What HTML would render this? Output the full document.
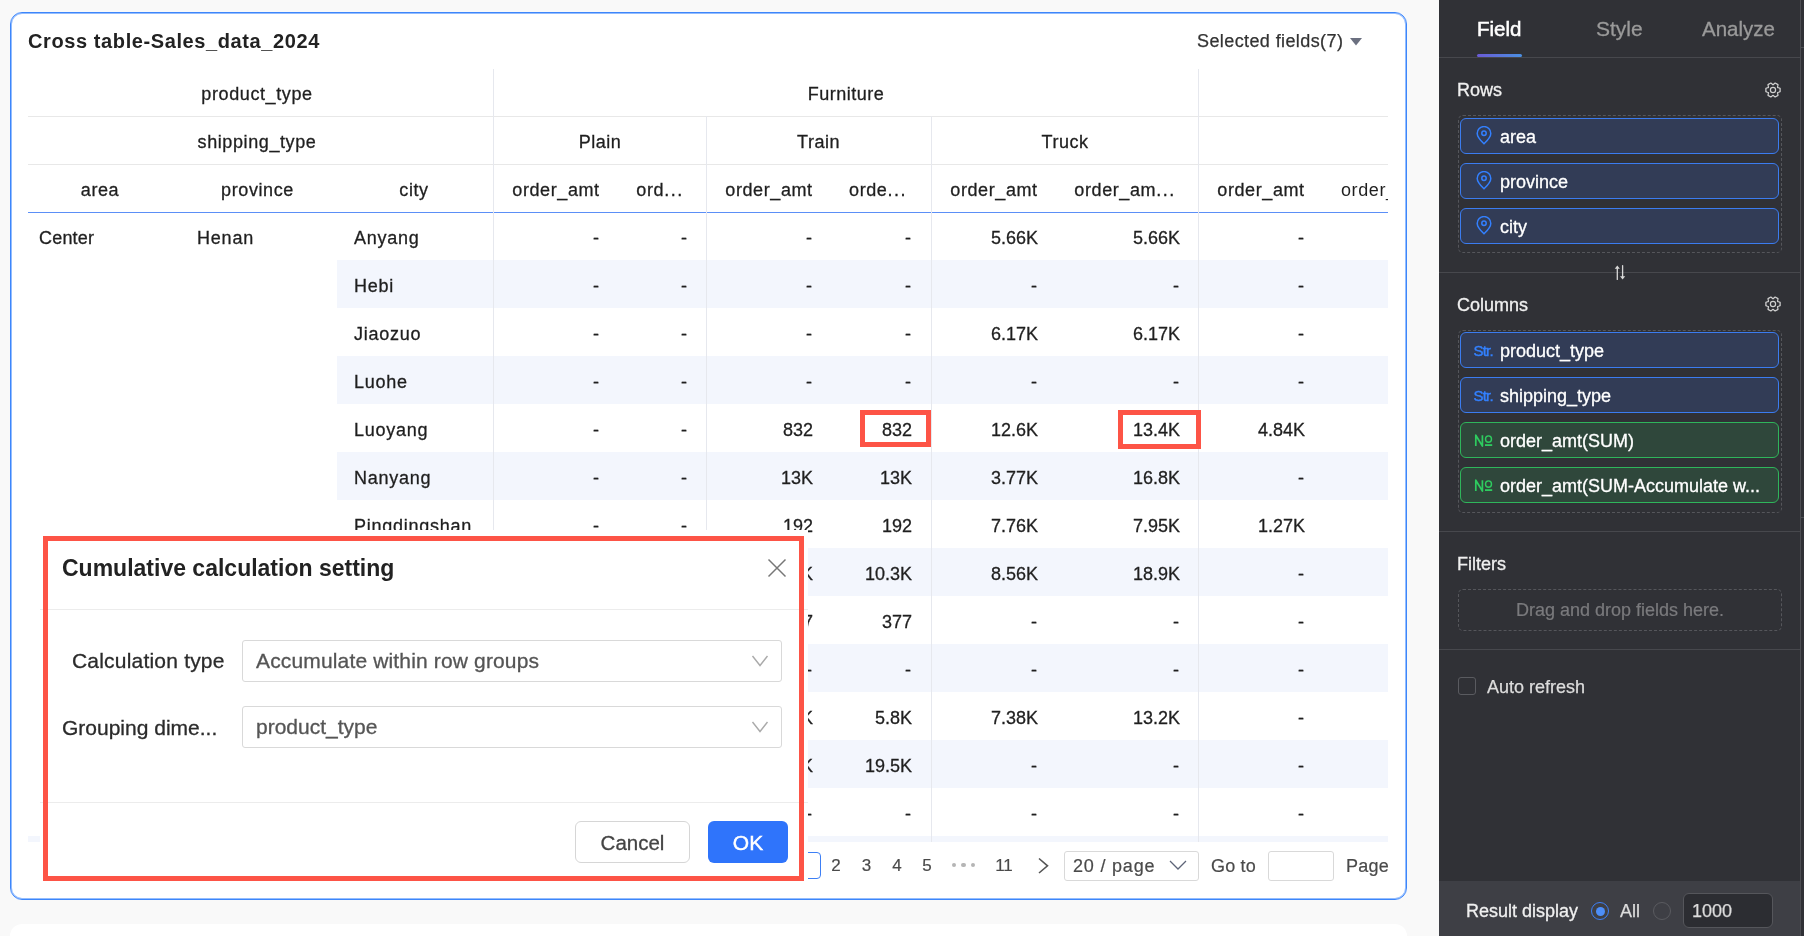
<!DOCTYPE html>
<html><head><meta charset="utf-8"><style>
html,body{margin:0;padding:0}
body{width:1804px;height:936px;position:relative;overflow:hidden;background:#f9f9f9;font-family:"Liberation Sans", sans-serif}
.t{position:absolute;line-height:1;white-space:nowrap}
</style></head><body><div style="position:absolute;left:0;top:0;width:1804px;height:936px;will-change:transform">
<div style="position:absolute;left:10px;top:12px;width:1397px;height:888px;box-sizing:border-box;border:1px solid #3d86fb;box-shadow:inset 0 0 0 1px rgba(61,134,251,0.55);border-radius:12px;background:#fff"></div>
<div style="position:absolute;left:10px;top:924px;width:1397px;height:60px;border-radius:12px;background:#fff"></div>
<div class="t" style="left:28px;top:31.07px;font-size:20px;color:#222;font-weight:bold;letter-spacing:0.6px;">Cross table-Sales_data_2024</div>
<div class="t" style="left:1197px;top:31.76px;font-size:18px;color:#333;font-weight:normal;letter-spacing:0.4px;-webkit-text-stroke:0.25px #333;">Selected fields(7)</div>
<svg style="position:absolute;left:1350px;top:38px" width="12" height="8"><path d="M0 0 L12 0 L6 7.5 Z" fill="#6b7080"/></svg>
<div style="position:absolute;left:337px;top:260px;width:1051px;height:48px;background:#f3f6fd"></div>
<div style="position:absolute;left:337px;top:356px;width:1051px;height:48px;background:#f3f6fd"></div>
<div style="position:absolute;left:337px;top:452px;width:1051px;height:48px;background:#f3f6fd"></div>
<div style="position:absolute;left:337px;top:548px;width:1051px;height:48px;background:#f3f6fd"></div>
<div style="position:absolute;left:337px;top:644px;width:1051px;height:48px;background:#f3f6fd"></div>
<div style="position:absolute;left:337px;top:740px;width:1051px;height:48px;background:#f3f6fd"></div>
<div style="position:absolute;left:28px;top:836px;width:1360px;height:6px;background:#f3f6fd"></div>
<div style="position:absolute;left:28px;top:116px;width:1360px;height:1px;background:#e8e8e8"></div>
<div style="position:absolute;left:28px;top:164px;width:1360px;height:1px;background:#e8e8e8"></div>
<div style="position:absolute;left:28px;top:212px;width:1360px;height:1px;background:#5b8ff7"></div>
<div style="position:absolute;left:493px;top:69px;width:1px;height:773px;background:#e6e8ee"></div>
<div style="position:absolute;left:1198px;top:69px;width:1px;height:773px;background:#e6e8ee"></div>
<div style="position:absolute;left:706px;top:116px;width:1px;height:726px;background:#e6e8ee"></div>
<div style="position:absolute;left:931px;top:116px;width:1px;height:726px;background:#e6e8ee"></div>
<div class="t" style="left:-143px;width:800px;text-align:center;top:84.76px;font-size:18px;color:#1f1f1f;font-weight:normal;letter-spacing:0.6px;-webkit-text-stroke:0.3px #1f1f1f;">product_type</div>
<div class="t" style="left:-143px;width:800px;text-align:center;top:132.76px;font-size:18px;color:#1f1f1f;font-weight:normal;letter-spacing:0.6px;-webkit-text-stroke:0.3px #1f1f1f;">shipping_type</div>
<div class="t" style="left:-300px;width:800px;text-align:center;top:180.76px;font-size:18px;color:#1f1f1f;font-weight:normal;letter-spacing:0.6px;-webkit-text-stroke:0.3px #1f1f1f;">area</div>
<div class="t" style="left:-142.5px;width:800px;text-align:center;top:180.76px;font-size:18px;color:#1f1f1f;font-weight:normal;letter-spacing:0.6px;-webkit-text-stroke:0.3px #1f1f1f;">province</div>
<div class="t" style="left:14px;width:800px;text-align:center;top:180.76px;font-size:18px;color:#1f1f1f;font-weight:normal;letter-spacing:0.6px;-webkit-text-stroke:0.3px #1f1f1f;">city</div>
<div class="t" style="left:446px;width:800px;text-align:center;top:84.76px;font-size:18px;color:#1f1f1f;font-weight:normal;letter-spacing:0.5px;-webkit-text-stroke:0.3px #1f1f1f;">Furniture</div>
<div class="t" style="left:200px;width:800px;text-align:center;top:132.76px;font-size:18px;color:#1f1f1f;font-weight:normal;letter-spacing:0.5px;-webkit-text-stroke:0.3px #1f1f1f;">Plain</div>
<div class="t" style="left:418.5px;width:800px;text-align:center;top:132.76px;font-size:18px;color:#1f1f1f;font-weight:normal;letter-spacing:0.5px;-webkit-text-stroke:0.3px #1f1f1f;">Train</div>
<div class="t" style="left:665px;width:800px;text-align:center;top:132.76px;font-size:18px;color:#1f1f1f;font-weight:normal;letter-spacing:0.5px;-webkit-text-stroke:0.3px #1f1f1f;">Truck</div>
<div class="t" style="left:156px;width:800px;text-align:center;top:180.76px;font-size:18px;color:#1f1f1f;font-weight:normal;letter-spacing:0.6px;-webkit-text-stroke:0.3px #1f1f1f;">order_amt</div>
<div class="t" style="left:369px;width:800px;text-align:center;top:180.76px;font-size:18px;color:#1f1f1f;font-weight:normal;letter-spacing:0.6px;-webkit-text-stroke:0.3px #1f1f1f;">order_amt</div>
<div class="t" style="left:594px;width:800px;text-align:center;top:180.76px;font-size:18px;color:#1f1f1f;font-weight:normal;letter-spacing:0.6px;-webkit-text-stroke:0.3px #1f1f1f;">order_amt</div>
<div class="t" style="left:861px;width:800px;text-align:center;top:180.76px;font-size:18px;color:#1f1f1f;font-weight:normal;letter-spacing:0.6px;-webkit-text-stroke:0.3px #1f1f1f;">order_amt</div>
<div class="t" style="left:260px;width:800px;text-align:center;top:180.76px;font-size:18px;color:#1f1f1f;font-weight:normal;letter-spacing:0.6px;-webkit-text-stroke:0.3px #1f1f1f;">ord<span style='letter-spacing:1.5px'>...</span></div>
<div class="t" style="left:478px;width:800px;text-align:center;top:180.76px;font-size:18px;color:#1f1f1f;font-weight:normal;letter-spacing:0.6px;-webkit-text-stroke:0.3px #1f1f1f;">orde<span style='letter-spacing:1.5px'>...</span></div>
<div class="t" style="left:725px;width:800px;text-align:center;top:180.76px;font-size:18px;color:#1f1f1f;font-weight:normal;letter-spacing:0.6px;-webkit-text-stroke:0.3px #1f1f1f;">order_am<span style='letter-spacing:1.5px'>...</span></div>
<div style="position:absolute;left:1324px;top:164px;width:64px;height:48px;overflow:hidden"><div class="t" style="left:17px;top:16.76px;font-size:18px;color:#1f1f1f;letter-spacing:0.6px">order_amt</div></div>
<div class="t" style="left:39px;top:228.76px;font-size:18px;color:#1f1f1f;font-weight:normal;letter-spacing:0.2px;-webkit-text-stroke:0.3px #1f1f1f;">Center</div>
<div class="t" style="left:197px;top:228.76px;font-size:18px;color:#1f1f1f;font-weight:normal;letter-spacing:0.8px;-webkit-text-stroke:0.3px #1f1f1f;">Henan</div>
<div class="t" style="left:354px;top:228.76px;font-size:18px;color:#1f1f1f;font-weight:normal;letter-spacing:0.75px;-webkit-text-stroke:0.3px #1f1f1f;">Anyang</div>
<div class="t" style="left:-201px;width:800px;text-align:right;top:228.76px;font-size:18px;color:#1f1f1f;font-weight:normal;-webkit-text-stroke:0.3px #1f1f1f;">-</div>
<div class="t" style="left:-113px;width:800px;text-align:right;top:228.76px;font-size:18px;color:#1f1f1f;font-weight:normal;-webkit-text-stroke:0.3px #1f1f1f;">-</div>
<div class="t" style="left:12px;width:800px;text-align:right;top:228.76px;font-size:18px;color:#1f1f1f;font-weight:normal;-webkit-text-stroke:0.3px #1f1f1f;">-</div>
<div class="t" style="left:111px;width:800px;text-align:right;top:228.76px;font-size:18px;color:#1f1f1f;font-weight:normal;-webkit-text-stroke:0.3px #1f1f1f;">-</div>
<div class="t" style="left:238px;width:800px;text-align:right;top:228.76px;font-size:18px;color:#1f1f1f;font-weight:normal;-webkit-text-stroke:0.3px #1f1f1f;">5.66K</div>
<div class="t" style="left:380px;width:800px;text-align:right;top:228.76px;font-size:18px;color:#1f1f1f;font-weight:normal;-webkit-text-stroke:0.3px #1f1f1f;">5.66K</div>
<div class="t" style="left:504px;width:800px;text-align:right;top:228.76px;font-size:18px;color:#1f1f1f;font-weight:normal;-webkit-text-stroke:0.3px #1f1f1f;">-</div>
<div class="t" style="left:354px;top:276.76px;font-size:18px;color:#1f1f1f;font-weight:normal;letter-spacing:0.75px;-webkit-text-stroke:0.3px #1f1f1f;">Hebi</div>
<div class="t" style="left:-201px;width:800px;text-align:right;top:276.76px;font-size:18px;color:#1f1f1f;font-weight:normal;-webkit-text-stroke:0.3px #1f1f1f;">-</div>
<div class="t" style="left:-113px;width:800px;text-align:right;top:276.76px;font-size:18px;color:#1f1f1f;font-weight:normal;-webkit-text-stroke:0.3px #1f1f1f;">-</div>
<div class="t" style="left:12px;width:800px;text-align:right;top:276.76px;font-size:18px;color:#1f1f1f;font-weight:normal;-webkit-text-stroke:0.3px #1f1f1f;">-</div>
<div class="t" style="left:111px;width:800px;text-align:right;top:276.76px;font-size:18px;color:#1f1f1f;font-weight:normal;-webkit-text-stroke:0.3px #1f1f1f;">-</div>
<div class="t" style="left:237px;width:800px;text-align:right;top:276.76px;font-size:18px;color:#1f1f1f;font-weight:normal;-webkit-text-stroke:0.3px #1f1f1f;">-</div>
<div class="t" style="left:379px;width:800px;text-align:right;top:276.76px;font-size:18px;color:#1f1f1f;font-weight:normal;-webkit-text-stroke:0.3px #1f1f1f;">-</div>
<div class="t" style="left:504px;width:800px;text-align:right;top:276.76px;font-size:18px;color:#1f1f1f;font-weight:normal;-webkit-text-stroke:0.3px #1f1f1f;">-</div>
<div class="t" style="left:354px;top:324.76px;font-size:18px;color:#1f1f1f;font-weight:normal;letter-spacing:0.75px;-webkit-text-stroke:0.3px #1f1f1f;">Jiaozuo</div>
<div class="t" style="left:-201px;width:800px;text-align:right;top:324.76px;font-size:18px;color:#1f1f1f;font-weight:normal;-webkit-text-stroke:0.3px #1f1f1f;">-</div>
<div class="t" style="left:-113px;width:800px;text-align:right;top:324.76px;font-size:18px;color:#1f1f1f;font-weight:normal;-webkit-text-stroke:0.3px #1f1f1f;">-</div>
<div class="t" style="left:12px;width:800px;text-align:right;top:324.76px;font-size:18px;color:#1f1f1f;font-weight:normal;-webkit-text-stroke:0.3px #1f1f1f;">-</div>
<div class="t" style="left:111px;width:800px;text-align:right;top:324.76px;font-size:18px;color:#1f1f1f;font-weight:normal;-webkit-text-stroke:0.3px #1f1f1f;">-</div>
<div class="t" style="left:238px;width:800px;text-align:right;top:324.76px;font-size:18px;color:#1f1f1f;font-weight:normal;-webkit-text-stroke:0.3px #1f1f1f;">6.17K</div>
<div class="t" style="left:380px;width:800px;text-align:right;top:324.76px;font-size:18px;color:#1f1f1f;font-weight:normal;-webkit-text-stroke:0.3px #1f1f1f;">6.17K</div>
<div class="t" style="left:504px;width:800px;text-align:right;top:324.76px;font-size:18px;color:#1f1f1f;font-weight:normal;-webkit-text-stroke:0.3px #1f1f1f;">-</div>
<div class="t" style="left:354px;top:372.76px;font-size:18px;color:#1f1f1f;font-weight:normal;letter-spacing:0.75px;-webkit-text-stroke:0.3px #1f1f1f;">Luohe</div>
<div class="t" style="left:-201px;width:800px;text-align:right;top:372.76px;font-size:18px;color:#1f1f1f;font-weight:normal;-webkit-text-stroke:0.3px #1f1f1f;">-</div>
<div class="t" style="left:-113px;width:800px;text-align:right;top:372.76px;font-size:18px;color:#1f1f1f;font-weight:normal;-webkit-text-stroke:0.3px #1f1f1f;">-</div>
<div class="t" style="left:12px;width:800px;text-align:right;top:372.76px;font-size:18px;color:#1f1f1f;font-weight:normal;-webkit-text-stroke:0.3px #1f1f1f;">-</div>
<div class="t" style="left:111px;width:800px;text-align:right;top:372.76px;font-size:18px;color:#1f1f1f;font-weight:normal;-webkit-text-stroke:0.3px #1f1f1f;">-</div>
<div class="t" style="left:237px;width:800px;text-align:right;top:372.76px;font-size:18px;color:#1f1f1f;font-weight:normal;-webkit-text-stroke:0.3px #1f1f1f;">-</div>
<div class="t" style="left:379px;width:800px;text-align:right;top:372.76px;font-size:18px;color:#1f1f1f;font-weight:normal;-webkit-text-stroke:0.3px #1f1f1f;">-</div>
<div class="t" style="left:504px;width:800px;text-align:right;top:372.76px;font-size:18px;color:#1f1f1f;font-weight:normal;-webkit-text-stroke:0.3px #1f1f1f;">-</div>
<div class="t" style="left:354px;top:420.76px;font-size:18px;color:#1f1f1f;font-weight:normal;letter-spacing:0.75px;-webkit-text-stroke:0.3px #1f1f1f;">Luoyang</div>
<div class="t" style="left:-201px;width:800px;text-align:right;top:420.76px;font-size:18px;color:#1f1f1f;font-weight:normal;-webkit-text-stroke:0.3px #1f1f1f;">-</div>
<div class="t" style="left:-113px;width:800px;text-align:right;top:420.76px;font-size:18px;color:#1f1f1f;font-weight:normal;-webkit-text-stroke:0.3px #1f1f1f;">-</div>
<div class="t" style="left:13px;width:800px;text-align:right;top:420.76px;font-size:18px;color:#1f1f1f;font-weight:normal;-webkit-text-stroke:0.3px #1f1f1f;">832</div>
<div class="t" style="left:112px;width:800px;text-align:right;top:420.76px;font-size:18px;color:#1f1f1f;font-weight:normal;-webkit-text-stroke:0.3px #1f1f1f;">832</div>
<div class="t" style="left:238px;width:800px;text-align:right;top:420.76px;font-size:18px;color:#1f1f1f;font-weight:normal;-webkit-text-stroke:0.3px #1f1f1f;">12.6K</div>
<div class="t" style="left:380px;width:800px;text-align:right;top:420.76px;font-size:18px;color:#1f1f1f;font-weight:normal;-webkit-text-stroke:0.3px #1f1f1f;">13.4K</div>
<div class="t" style="left:505px;width:800px;text-align:right;top:420.76px;font-size:18px;color:#1f1f1f;font-weight:normal;-webkit-text-stroke:0.3px #1f1f1f;">4.84K</div>
<div class="t" style="left:354px;top:468.76px;font-size:18px;color:#1f1f1f;font-weight:normal;letter-spacing:0.75px;-webkit-text-stroke:0.3px #1f1f1f;">Nanyang</div>
<div class="t" style="left:-201px;width:800px;text-align:right;top:468.76px;font-size:18px;color:#1f1f1f;font-weight:normal;-webkit-text-stroke:0.3px #1f1f1f;">-</div>
<div class="t" style="left:-113px;width:800px;text-align:right;top:468.76px;font-size:18px;color:#1f1f1f;font-weight:normal;-webkit-text-stroke:0.3px #1f1f1f;">-</div>
<div class="t" style="left:13px;width:800px;text-align:right;top:468.76px;font-size:18px;color:#1f1f1f;font-weight:normal;-webkit-text-stroke:0.3px #1f1f1f;">13K</div>
<div class="t" style="left:112px;width:800px;text-align:right;top:468.76px;font-size:18px;color:#1f1f1f;font-weight:normal;-webkit-text-stroke:0.3px #1f1f1f;">13K</div>
<div class="t" style="left:238px;width:800px;text-align:right;top:468.76px;font-size:18px;color:#1f1f1f;font-weight:normal;-webkit-text-stroke:0.3px #1f1f1f;">3.77K</div>
<div class="t" style="left:380px;width:800px;text-align:right;top:468.76px;font-size:18px;color:#1f1f1f;font-weight:normal;-webkit-text-stroke:0.3px #1f1f1f;">16.8K</div>
<div class="t" style="left:504px;width:800px;text-align:right;top:468.76px;font-size:18px;color:#1f1f1f;font-weight:normal;-webkit-text-stroke:0.3px #1f1f1f;">-</div>
<div class="t" style="left:354px;top:516.76px;font-size:18px;color:#1f1f1f;font-weight:normal;letter-spacing:0.75px;-webkit-text-stroke:0.3px #1f1f1f;">Pingdingshan</div>
<div class="t" style="left:-201px;width:800px;text-align:right;top:516.76px;font-size:18px;color:#1f1f1f;font-weight:normal;-webkit-text-stroke:0.3px #1f1f1f;">-</div>
<div class="t" style="left:-113px;width:800px;text-align:right;top:516.76px;font-size:18px;color:#1f1f1f;font-weight:normal;-webkit-text-stroke:0.3px #1f1f1f;">-</div>
<div class="t" style="left:13px;width:800px;text-align:right;top:516.76px;font-size:18px;color:#1f1f1f;font-weight:normal;-webkit-text-stroke:0.3px #1f1f1f;">192</div>
<div class="t" style="left:112px;width:800px;text-align:right;top:516.76px;font-size:18px;color:#1f1f1f;font-weight:normal;-webkit-text-stroke:0.3px #1f1f1f;">192</div>
<div class="t" style="left:238px;width:800px;text-align:right;top:516.76px;font-size:18px;color:#1f1f1f;font-weight:normal;-webkit-text-stroke:0.3px #1f1f1f;">7.76K</div>
<div class="t" style="left:380px;width:800px;text-align:right;top:516.76px;font-size:18px;color:#1f1f1f;font-weight:normal;-webkit-text-stroke:0.3px #1f1f1f;">7.95K</div>
<div class="t" style="left:505px;width:800px;text-align:right;top:516.76px;font-size:18px;color:#1f1f1f;font-weight:normal;-webkit-text-stroke:0.3px #1f1f1f;">1.27K</div>
<div class="t" style="left:-201px;width:800px;text-align:right;top:564.76px;font-size:18px;color:#1f1f1f;font-weight:normal;-webkit-text-stroke:0.3px #1f1f1f;">-</div>
<div class="t" style="left:-113px;width:800px;text-align:right;top:564.76px;font-size:18px;color:#1f1f1f;font-weight:normal;-webkit-text-stroke:0.3px #1f1f1f;">-</div>
<div class="t" style="left:13px;width:800px;text-align:right;top:564.76px;font-size:18px;color:#1f1f1f;font-weight:normal;-webkit-text-stroke:0.3px #1f1f1f;">10.3K</div>
<div class="t" style="left:112px;width:800px;text-align:right;top:564.76px;font-size:18px;color:#1f1f1f;font-weight:normal;-webkit-text-stroke:0.3px #1f1f1f;">10.3K</div>
<div class="t" style="left:238px;width:800px;text-align:right;top:564.76px;font-size:18px;color:#1f1f1f;font-weight:normal;-webkit-text-stroke:0.3px #1f1f1f;">8.56K</div>
<div class="t" style="left:380px;width:800px;text-align:right;top:564.76px;font-size:18px;color:#1f1f1f;font-weight:normal;-webkit-text-stroke:0.3px #1f1f1f;">18.9K</div>
<div class="t" style="left:504px;width:800px;text-align:right;top:564.76px;font-size:18px;color:#1f1f1f;font-weight:normal;-webkit-text-stroke:0.3px #1f1f1f;">-</div>
<div class="t" style="left:-201px;width:800px;text-align:right;top:612.76px;font-size:18px;color:#1f1f1f;font-weight:normal;-webkit-text-stroke:0.3px #1f1f1f;">-</div>
<div class="t" style="left:-113px;width:800px;text-align:right;top:612.76px;font-size:18px;color:#1f1f1f;font-weight:normal;-webkit-text-stroke:0.3px #1f1f1f;">-</div>
<div class="t" style="left:13px;width:800px;text-align:right;top:612.76px;font-size:18px;color:#1f1f1f;font-weight:normal;-webkit-text-stroke:0.3px #1f1f1f;">377</div>
<div class="t" style="left:112px;width:800px;text-align:right;top:612.76px;font-size:18px;color:#1f1f1f;font-weight:normal;-webkit-text-stroke:0.3px #1f1f1f;">377</div>
<div class="t" style="left:237px;width:800px;text-align:right;top:612.76px;font-size:18px;color:#1f1f1f;font-weight:normal;-webkit-text-stroke:0.3px #1f1f1f;">-</div>
<div class="t" style="left:379px;width:800px;text-align:right;top:612.76px;font-size:18px;color:#1f1f1f;font-weight:normal;-webkit-text-stroke:0.3px #1f1f1f;">-</div>
<div class="t" style="left:504px;width:800px;text-align:right;top:612.76px;font-size:18px;color:#1f1f1f;font-weight:normal;-webkit-text-stroke:0.3px #1f1f1f;">-</div>
<div class="t" style="left:-201px;width:800px;text-align:right;top:660.76px;font-size:18px;color:#1f1f1f;font-weight:normal;-webkit-text-stroke:0.3px #1f1f1f;">-</div>
<div class="t" style="left:-113px;width:800px;text-align:right;top:660.76px;font-size:18px;color:#1f1f1f;font-weight:normal;-webkit-text-stroke:0.3px #1f1f1f;">-</div>
<div class="t" style="left:12px;width:800px;text-align:right;top:660.76px;font-size:18px;color:#1f1f1f;font-weight:normal;-webkit-text-stroke:0.3px #1f1f1f;">-</div>
<div class="t" style="left:111px;width:800px;text-align:right;top:660.76px;font-size:18px;color:#1f1f1f;font-weight:normal;-webkit-text-stroke:0.3px #1f1f1f;">-</div>
<div class="t" style="left:237px;width:800px;text-align:right;top:660.76px;font-size:18px;color:#1f1f1f;font-weight:normal;-webkit-text-stroke:0.3px #1f1f1f;">-</div>
<div class="t" style="left:379px;width:800px;text-align:right;top:660.76px;font-size:18px;color:#1f1f1f;font-weight:normal;-webkit-text-stroke:0.3px #1f1f1f;">-</div>
<div class="t" style="left:504px;width:800px;text-align:right;top:660.76px;font-size:18px;color:#1f1f1f;font-weight:normal;-webkit-text-stroke:0.3px #1f1f1f;">-</div>
<div class="t" style="left:-201px;width:800px;text-align:right;top:708.76px;font-size:18px;color:#1f1f1f;font-weight:normal;-webkit-text-stroke:0.3px #1f1f1f;">-</div>
<div class="t" style="left:-113px;width:800px;text-align:right;top:708.76px;font-size:18px;color:#1f1f1f;font-weight:normal;-webkit-text-stroke:0.3px #1f1f1f;">-</div>
<div class="t" style="left:13px;width:800px;text-align:right;top:708.76px;font-size:18px;color:#1f1f1f;font-weight:normal;-webkit-text-stroke:0.3px #1f1f1f;">5.8K</div>
<div class="t" style="left:112px;width:800px;text-align:right;top:708.76px;font-size:18px;color:#1f1f1f;font-weight:normal;-webkit-text-stroke:0.3px #1f1f1f;">5.8K</div>
<div class="t" style="left:238px;width:800px;text-align:right;top:708.76px;font-size:18px;color:#1f1f1f;font-weight:normal;-webkit-text-stroke:0.3px #1f1f1f;">7.38K</div>
<div class="t" style="left:380px;width:800px;text-align:right;top:708.76px;font-size:18px;color:#1f1f1f;font-weight:normal;-webkit-text-stroke:0.3px #1f1f1f;">13.2K</div>
<div class="t" style="left:504px;width:800px;text-align:right;top:708.76px;font-size:18px;color:#1f1f1f;font-weight:normal;-webkit-text-stroke:0.3px #1f1f1f;">-</div>
<div class="t" style="left:-201px;width:800px;text-align:right;top:756.76px;font-size:18px;color:#1f1f1f;font-weight:normal;-webkit-text-stroke:0.3px #1f1f1f;">-</div>
<div class="t" style="left:-113px;width:800px;text-align:right;top:756.76px;font-size:18px;color:#1f1f1f;font-weight:normal;-webkit-text-stroke:0.3px #1f1f1f;">-</div>
<div class="t" style="left:13px;width:800px;text-align:right;top:756.76px;font-size:18px;color:#1f1f1f;font-weight:normal;-webkit-text-stroke:0.3px #1f1f1f;">19.5K</div>
<div class="t" style="left:112px;width:800px;text-align:right;top:756.76px;font-size:18px;color:#1f1f1f;font-weight:normal;-webkit-text-stroke:0.3px #1f1f1f;">19.5K</div>
<div class="t" style="left:237px;width:800px;text-align:right;top:756.76px;font-size:18px;color:#1f1f1f;font-weight:normal;-webkit-text-stroke:0.3px #1f1f1f;">-</div>
<div class="t" style="left:379px;width:800px;text-align:right;top:756.76px;font-size:18px;color:#1f1f1f;font-weight:normal;-webkit-text-stroke:0.3px #1f1f1f;">-</div>
<div class="t" style="left:504px;width:800px;text-align:right;top:756.76px;font-size:18px;color:#1f1f1f;font-weight:normal;-webkit-text-stroke:0.3px #1f1f1f;">-</div>
<div class="t" style="left:-201px;width:800px;text-align:right;top:804.76px;font-size:18px;color:#1f1f1f;font-weight:normal;-webkit-text-stroke:0.3px #1f1f1f;">-</div>
<div class="t" style="left:-113px;width:800px;text-align:right;top:804.76px;font-size:18px;color:#1f1f1f;font-weight:normal;-webkit-text-stroke:0.3px #1f1f1f;">-</div>
<div class="t" style="left:12px;width:800px;text-align:right;top:804.76px;font-size:18px;color:#1f1f1f;font-weight:normal;-webkit-text-stroke:0.3px #1f1f1f;">-</div>
<div class="t" style="left:111px;width:800px;text-align:right;top:804.76px;font-size:18px;color:#1f1f1f;font-weight:normal;-webkit-text-stroke:0.3px #1f1f1f;">-</div>
<div class="t" style="left:237px;width:800px;text-align:right;top:804.76px;font-size:18px;color:#1f1f1f;font-weight:normal;-webkit-text-stroke:0.3px #1f1f1f;">-</div>
<div class="t" style="left:379px;width:800px;text-align:right;top:804.76px;font-size:18px;color:#1f1f1f;font-weight:normal;-webkit-text-stroke:0.3px #1f1f1f;">-</div>
<div class="t" style="left:504px;width:800px;text-align:right;top:804.76px;font-size:18px;color:#1f1f1f;font-weight:normal;-webkit-text-stroke:0.3px #1f1f1f;">-</div>
<div style="position:absolute;left:860px;top:410px;width:71px;height:37px;box-sizing:border-box;border:5px solid #fd5446"></div>
<div style="position:absolute;left:1118px;top:410px;width:83px;height:39px;box-sizing:border-box;border:5px solid #fd5446"></div>
<div style="position:absolute;left:790px;top:852px;width:31px;height:27px;box-sizing:border-box;border:1px solid #3d7ff5;border-radius:4px"></div>
<div class="t" style="left:436px;width:800px;text-align:center;top:856.61px;font-size:17px;color:#4a4a4a;font-weight:normal;-webkit-text-stroke:0.2px #4a4a4a;">2</div>
<div class="t" style="left:466.5px;width:800px;text-align:center;top:856.61px;font-size:17px;color:#4a4a4a;font-weight:normal;-webkit-text-stroke:0.2px #4a4a4a;">3</div>
<div class="t" style="left:497px;width:800px;text-align:center;top:856.61px;font-size:17px;color:#4a4a4a;font-weight:normal;-webkit-text-stroke:0.2px #4a4a4a;">4</div>
<div class="t" style="left:527px;width:800px;text-align:center;top:856.61px;font-size:17px;color:#4a4a4a;font-weight:normal;-webkit-text-stroke:0.2px #4a4a4a;">5</div>
<div style="position:absolute;left:951.8px;top:862.8px;width:4.4px;height:4.4px;background:#b5b5b5;border-radius:50%"></div>
<div style="position:absolute;left:961.3px;top:862.8px;width:4.4px;height:4.4px;background:#b5b5b5;border-radius:50%"></div>
<div style="position:absolute;left:970.8px;top:862.8px;width:4.4px;height:4.4px;background:#b5b5b5;border-radius:50%"></div>
<div class="t" style="left:604px;width:800px;text-align:center;top:856.61px;font-size:17px;color:#4a4a4a;font-weight:normal;-webkit-text-stroke:0.2px #4a4a4a;">11</div>
<svg style="position:absolute;left:1036px;top:856px" width="16" height="20"><path d="M3 2.5 L11.5 9.8 L3 17" fill="none" stroke="#555" stroke-width="1.6"/></svg>
<div style="position:absolute;left:1064px;top:851px;width:135px;height:30px;box-sizing:border-box;border:1px solid #d9d9d9;border-radius:3px"></div>
<div class="t" style="left:1073px;top:856.76px;font-size:18px;color:#4a4a4a;font-weight:normal;letter-spacing:0.8px;-webkit-text-stroke:0.2px #4a4a4a;">20 / page</div>
<svg style="position:absolute;left:1168px;top:858px" width="20" height="14"><path d="M2 3 L10 11 L18 3" fill="none" stroke="#5d6478" stroke-width="1.25"/></svg>
<div class="t" style="left:1211px;top:856.76px;font-size:18px;color:#4a4a4a;font-weight:normal;letter-spacing:0.2px;-webkit-text-stroke:0.2px #4a4a4a;">Go to</div>
<div style="position:absolute;left:1268px;top:851px;width:66px;height:30px;box-sizing:border-box;border:1px solid #d9d9d9;border-radius:3px"></div>
<div class="t" style="left:1346px;top:856.76px;font-size:18px;color:#4a4a4a;font-weight:normal;letter-spacing:0.2px;-webkit-text-stroke:0.2px #4a4a4a;">Page</div>
<div style="position:absolute;left:40px;top:530px;width:768px;height:351px;background:#fff"></div>
<div style="position:absolute;left:40px;top:609px;width:768px;height:1px;background:#ececec"></div>
<div style="position:absolute;left:40px;top:802px;width:768px;height:1px;background:#ececec"></div>
<div style="position:absolute;left:43px;top:536px;width:761px;height:345px;box-sizing:border-box;border:5px solid #fd5446"></div>
<div class="t" style="left:62px;top:556.53px;font-size:23px;color:#222;font-weight:bold;">Cumulative calculation setting</div>
<svg style="position:absolute;left:767px;top:558px" width="20" height="20"><path d="M1.5 1.5 L18.5 18.5 M18.5 1.5 L1.5 18.5" fill="none" stroke="#777" stroke-width="1.5"/></svg>
<div class="t" style="left:72px;top:649.72px;font-size:21px;color:#2b2b2b;font-weight:normal;letter-spacing:0.2px;-webkit-text-stroke:0.3px #2b2b2b;">Calculation type</div>
<div style="position:absolute;left:242px;top:640px;width:540px;height:42px;box-sizing:border-box;border:1px solid #d9d9d9;border-radius:3px"></div>
<div class="t" style="left:256px;top:649.72px;font-size:21px;color:#555;font-weight:normal;letter-spacing:0.15px;-webkit-text-stroke:0.3px #555;">Accumulate within row groups</div>
<svg style="position:absolute;left:751px;top:654px" width="18" height="14"><path d="M1.5 2 L9 11.5 L16.5 2" fill="none" stroke="#aaa" stroke-width="1.4"/></svg>
<div class="t" style="left:62px;top:716.52px;font-size:21px;color:#2b2b2b;font-weight:normal;-webkit-text-stroke:0.3px #2b2b2b;">Grouping dime...</div>
<div style="position:absolute;left:242px;top:706px;width:540px;height:42px;box-sizing:border-box;border:1px solid #d9d9d9;border-radius:3px"></div>
<div class="t" style="left:256px;top:716.22px;font-size:21px;color:#555;font-weight:normal;-webkit-text-stroke:0.3px #555;">product_type</div>
<svg style="position:absolute;left:751px;top:720px" width="18" height="14"><path d="M1.5 2 L9 11.5 L16.5 2" fill="none" stroke="#aaa" stroke-width="1.4"/></svg>
<div style="position:absolute;left:575px;top:821px;width:115px;height:42px;box-sizing:border-box;border:1px solid #d6d6d6;border-radius:6px;background:#fff"></div>
<div class="t" style="left:232.5px;width:800px;text-align:center;top:832.65px;font-size:20.5px;color:#444;font-weight:normal;-webkit-text-stroke:0.3px #444;">Cancel</div>
<div style="position:absolute;left:708px;top:821px;width:80px;height:42px;border-radius:6px;background:#2f74fb"></div>
<div class="t" style="left:348px;width:800px;text-align:center;top:832.22px;font-size:21px;color:#fff;font-weight:normal;-webkit-text-stroke:0.4px #fff;">OK</div>
<div style="position:absolute;left:1439px;top:0px;width:365px;height:936px;background:#303136"></div>
<div style="position:absolute;left:1800px;top:0px;width:1px;height:936px;background:#4c4d52"></div>
<div style="position:absolute;left:1801px;top:47px;width:3px;height:1px;background:#4c4d52"></div>
<div style="position:absolute;left:1801px;top:517px;width:3px;height:1px;background:#4c4d52"></div>
<div class="t" style="left:1477px;top:18.65px;font-size:20.5px;color:#fff;font-weight:normal;-webkit-text-stroke:0.55px #fff;">Field</div>
<div style="position:absolute;left:1477px;top:54px;width:45px;height:3px;border-radius:2px;background:linear-gradient(90deg,#6b5bd6,#4a90e2)"></div>
<div class="t" style="left:1596px;top:18.22px;font-size:21px;color:#9a9a9a;font-weight:normal;-webkit-text-stroke:0.3px #9a9a9a;">Style</div>
<div class="t" style="left:1702px;top:18.65px;font-size:20.5px;color:#9a9a9a;font-weight:normal;-webkit-text-stroke:0.3px #9a9a9a;">Analyze</div>
<div style="position:absolute;left:1439px;top:57px;width:361px;height:1px;background:#47484d"></div>
<div class="t" style="left:1457px;top:80.76px;font-size:18px;color:#f0f0f0;font-weight:normal;-webkit-text-stroke:0.3px #f0f0f0;">Rows</div>
<svg style="position:absolute;left:1764px;top:81px" width="18" height="18" viewBox="0 0 18 18"><path d="M16.11 10.64 L16.11 7.36 L14.56 6.75 Q12.98 6.70 13.73 5.31 L13.98 3.66 L11.13 2.02 L9.84 3.06 Q9.00 4.40 8.16 3.06 L6.87 2.02 L4.02 3.66 L4.27 5.31 Q5.02 6.70 3.44 6.75 L1.89 7.36 L1.89 10.64 L3.44 11.25 Q5.02 11.30 4.27 12.69 L4.02 14.34 L6.87 15.98 L8.16 14.94 Q9.00 13.60 9.84 14.94 L11.13 15.98 L13.98 14.34 L13.73 12.69 Q12.98 11.30 14.56 11.25 L16.11 10.64 Z" fill="none" stroke="#d0d0d0" stroke-width="1.25" stroke-linejoin="round"/><circle cx="9" cy="9" r="2.6" fill="none" stroke="#d0d0d0" stroke-width="1.2"/></svg>
<div style="position:absolute;left:1458px;top:115px;width:324px;height:138px;box-sizing:border-box;border:1px dashed #55565b;border-radius:5px"></div>
<div style="position:absolute;left:1460px;top:118px;width:319px;height:36px;box-sizing:border-box;border:1.3px solid #3b7cf0;border-radius:6px;background:#323c56"></div>
<svg style="position:absolute;left:1475.5px;top:126px" width="16" height="19" viewBox="0 0 16 19"><path d="M8 17.8 C8 17.8 1.2 11.2 1.2 7.4 A6.8 6.8 0 0 1 14.8 7.4 C14.8 11.2 8 17.8 8 17.8 Z" fill="none" stroke="#3380ff" stroke-width="1.5"/><circle cx="8" cy="7.2" r="2.2" fill="none" stroke="#3380ff" stroke-width="1.5"/></svg>
<div class="t" style="left:1500px;top:127.76px;font-size:18px;color:#fff;font-weight:normal;-webkit-text-stroke:0.3px #fff;">area</div>
<div style="position:absolute;left:1460px;top:163px;width:319px;height:36px;box-sizing:border-box;border:1.3px solid #3b7cf0;border-radius:6px;background:#323c56"></div>
<svg style="position:absolute;left:1475.5px;top:171px" width="16" height="19" viewBox="0 0 16 19"><path d="M8 17.8 C8 17.8 1.2 11.2 1.2 7.4 A6.8 6.8 0 0 1 14.8 7.4 C14.8 11.2 8 17.8 8 17.8 Z" fill="none" stroke="#3380ff" stroke-width="1.5"/><circle cx="8" cy="7.2" r="2.2" fill="none" stroke="#3380ff" stroke-width="1.5"/></svg>
<div class="t" style="left:1500px;top:172.76px;font-size:18px;color:#fff;font-weight:normal;-webkit-text-stroke:0.3px #fff;">province</div>
<div style="position:absolute;left:1460px;top:208px;width:319px;height:36px;box-sizing:border-box;border:1.3px solid #3b7cf0;border-radius:6px;background:#323c56"></div>
<svg style="position:absolute;left:1475.5px;top:216px" width="16" height="19" viewBox="0 0 16 19"><path d="M8 17.8 C8 17.8 1.2 11.2 1.2 7.4 A6.8 6.8 0 0 1 14.8 7.4 C14.8 11.2 8 17.8 8 17.8 Z" fill="none" stroke="#3380ff" stroke-width="1.5"/><circle cx="8" cy="7.2" r="2.2" fill="none" stroke="#3380ff" stroke-width="1.5"/></svg>
<div class="t" style="left:1500px;top:217.76px;font-size:18px;color:#fff;font-weight:normal;-webkit-text-stroke:0.3px #fff;">city</div>
<div style="position:absolute;left:1439px;top:272px;width:361px;height:1px;background:#47484d"></div>
<svg style="position:absolute;left:1612px;top:263px" width="16" height="19" viewBox="0 0 16 19"><path d="M5.3 5 V16.4 M10.6 2.6 V14" fill="none" stroke="#d8d8d8" stroke-width="1.3" stroke-linecap="round"/><path d="M2.7 5.8 L5.3 2.5 L7.9 5.8 Z M8 13.3 L10.6 16.6 L13.2 13.3 Z" fill="#d8d8d8"/></svg>
<div class="t" style="left:1457px;top:295.76px;font-size:18px;color:#f0f0f0;font-weight:normal;-webkit-text-stroke:0.3px #f0f0f0;">Columns</div>
<svg style="position:absolute;left:1764px;top:295px" width="18" height="18" viewBox="0 0 18 18"><path d="M16.11 10.64 L16.11 7.36 L14.56 6.75 Q12.98 6.70 13.73 5.31 L13.98 3.66 L11.13 2.02 L9.84 3.06 Q9.00 4.40 8.16 3.06 L6.87 2.02 L4.02 3.66 L4.27 5.31 Q5.02 6.70 3.44 6.75 L1.89 7.36 L1.89 10.64 L3.44 11.25 Q5.02 11.30 4.27 12.69 L4.02 14.34 L6.87 15.98 L8.16 14.94 Q9.00 13.60 9.84 14.94 L11.13 15.98 L13.98 14.34 L13.73 12.69 Q12.98 11.30 14.56 11.25 L16.11 10.64 Z" fill="none" stroke="#d0d0d0" stroke-width="1.25" stroke-linejoin="round"/><circle cx="9" cy="9" r="2.6" fill="none" stroke="#d0d0d0" stroke-width="1.2"/></svg>
<div style="position:absolute;left:1458px;top:330px;width:324px;height:183px;box-sizing:border-box;border:1px dashed #55565b;border-radius:5px"></div>
<div style="position:absolute;left:1460px;top:332px;width:319px;height:36px;box-sizing:border-box;border:1.3px solid #3b7cf0;border-radius:6px;background:#323c56"></div>
<div class="t" style="left:1473.5px;top:343.10px;font-size:15px;color:#3380ff;font-weight:normal;letter-spacing:-0.8px;-webkit-text-stroke:0.4px #3380ff;">Str.</div>
<div class="t" style="left:1500px;top:341.76px;font-size:18px;color:#fff;font-weight:normal;-webkit-text-stroke:0.3px #fff;">product_type</div>
<div style="position:absolute;left:1460px;top:377px;width:319px;height:36px;box-sizing:border-box;border:1.3px solid #3b7cf0;border-radius:6px;background:#323c56"></div>
<div class="t" style="left:1473.5px;top:388.10px;font-size:15px;color:#3380ff;font-weight:normal;letter-spacing:-0.8px;-webkit-text-stroke:0.4px #3380ff;">Str.</div>
<div class="t" style="left:1500px;top:386.76px;font-size:18px;color:#fff;font-weight:normal;-webkit-text-stroke:0.3px #fff;">shipping_type</div>
<div style="position:absolute;left:1460px;top:422px;width:319px;height:36px;box-sizing:border-box;border:1.3px solid #2fb55b;border-radius:6px;background:#2f473b"></div>
<svg style="position:absolute;left:1474px;top:434px" width="20" height="14"><path d="M1.8 12 V1.2 L8.4 12 V1.2" fill="none" stroke="#2ecc5f" stroke-width="1.7" stroke-linejoin="round"/><ellipse cx="14.5" cy="5.1" rx="3" ry="3.2" fill="none" stroke="#2ecc5f" stroke-width="1.4"/><rect x="11" y="10.2" width="7.2" height="1.8" fill="#2ecc5f"/></svg>
<div class="t" style="left:1500px;top:431.76px;font-size:18px;color:#fff;font-weight:normal;-webkit-text-stroke:0.3px #fff;">order_amt(SUM)</div>
<div style="position:absolute;left:1460px;top:467px;width:319px;height:36px;box-sizing:border-box;border:1.3px solid #2fb55b;border-radius:6px;background:#2f473b"></div>
<svg style="position:absolute;left:1474px;top:479px" width="20" height="14"><path d="M1.8 12 V1.2 L8.4 12 V1.2" fill="none" stroke="#2ecc5f" stroke-width="1.7" stroke-linejoin="round"/><ellipse cx="14.5" cy="5.1" rx="3" ry="3.2" fill="none" stroke="#2ecc5f" stroke-width="1.4"/><rect x="11" y="10.2" width="7.2" height="1.8" fill="#2ecc5f"/></svg>
<div class="t" style="left:1500px;top:476.76px;font-size:18px;color:#fff;font-weight:normal;-webkit-text-stroke:0.3px #fff;">order_amt(SUM-Accumulate w...</div>
<div style="position:absolute;left:1439px;top:531px;width:361px;height:1px;background:#47484d"></div>
<div class="t" style="left:1457px;top:554.76px;font-size:18px;color:#f0f0f0;font-weight:normal;-webkit-text-stroke:0.3px #f0f0f0;">Filters</div>
<div style="position:absolute;left:1458px;top:589px;width:324px;height:42px;box-sizing:border-box;border:1px dashed #55565b;border-radius:5px"></div>
<div class="t" style="left:1220px;width:800px;text-align:center;top:600.76px;font-size:18px;color:#7a7a7d;font-weight:normal;-webkit-text-stroke:0.2px #7a7a7d;">Drag and drop fields here.</div>
<div style="position:absolute;left:1439px;top:649px;width:361px;height:1px;background:#47484d"></div>
<div style="position:absolute;left:1458px;top:677px;width:18px;height:18px;box-sizing:border-box;border:1px solid #5a5b60;border-radius:3px"></div>
<div class="t" style="left:1487px;top:677.76px;font-size:18px;color:#ddd;font-weight:normal;-webkit-text-stroke:0.25px #ddd;">Auto refresh</div>
<div style="position:absolute;left:1439px;top:881px;width:361px;height:55px;background:#3e3f45"></div>
<div class="t" style="left:1466px;top:901.76px;font-size:18px;color:#f0f0f0;font-weight:normal;-webkit-text-stroke:0.3px #f0f0f0;">Result display</div>
<div style="position:absolute;left:1591px;top:902px;width:18px;height:18px;box-sizing:border-box;border:1.3px solid #3d7ff5;border-radius:50%"></div>
<div style="position:absolute;left:1595.5px;top:906.5px;width:9px;height:9px;background:#4d8ef8;border-radius:50%"></div>
<div class="t" style="left:1620px;top:901.76px;font-size:18px;color:#ddd;font-weight:normal;-webkit-text-stroke:0.25px #ddd;">All</div>
<div style="position:absolute;left:1653px;top:902px;width:18px;height:18px;box-sizing:border-box;border:1px solid #5a5b60;border-radius:50%"></div>
<div style="position:absolute;left:1683px;top:893px;width:90px;height:35px;box-sizing:border-box;border:1px solid #55565b;border-radius:6px;background:#2c2d32"></div>
<div class="t" style="left:1692px;top:901.76px;font-size:18px;color:#ddd;font-weight:normal;-webkit-text-stroke:0.25px #ddd;">1000</div>
</div></body></html>
